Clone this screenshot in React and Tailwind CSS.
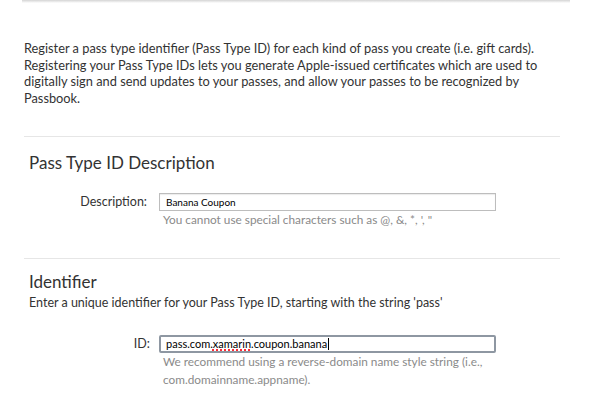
import React from 'react';

const font = { fontFamily: 'Lato, "Noto Sans", sans-serif' };

export default function App() {
  return (
    <div className="relative h-[413px] w-[600px] overflow-hidden bg-white text-[#333]" style={font}>
      {/* top edge of the panel above */}
      <div className="ml-[22px] h-[3px] w-[548px] bg-gradient-to-b from-[#d4d4d4] to-white" />

      <div className="ml-[24px] w-[536px]">
        <p className="mt-[37px] w-[545px] text-[12.8px] leading-[16.5px]">
          Register a pass type identifier (Pass Type ID) for each kind of pass you create (i.e. gift cards).
          Registering your Pass Type IDs lets you generate Apple-issued certificates which are used to
          digitally sign and send updates to your passes, and allow your passes to be recognized by
          Passbook.
        </p>

        <div className="mt-[30px] border-t border-[#e6e6e6]" />

        <h2 className="mt-[16px] pl-[5px] text-[17px] leading-[20px]">Pass Type ID Description</h2>
        <div className="mt-[20px] flex">
          <label className="w-[123px] pt-[1px] text-right text-[12.5px] leading-[16px]">Description:</label>
          <div className="ml-[12px]">
            <div className="flex h-[18px] w-[337px] items-center border border-[#bdbdbd] px-[6px] text-[10px] text-black shadow-[inset_0_1px_1px_rgba(0,0,0,0.08)]">
              Banana Coupon
            </div>
            <p className="pl-[4px] text-[11.8px] leading-[18px] text-[#8a8a8a]">
              You cannot use special characters such as @, &amp;, *, ', "
            </p>
          </div>
        </div>

        <div className="mt-[29px] border-t border-[#e6e6e6]" />

        <h2 className="mt-[13px] pl-[5px] text-[17px] leading-[20px]">Identifier</h2>
        <p className="mt-[2px] pl-[5px] text-[12.5px] leading-[17px]">
          Enter a unique identifier for your Pass Type ID, starting with the string 'pass'
        </p>
        <div className="mt-[24px] flex">
          <label className="w-[126px] pt-[1px] text-right text-[12.5px] leading-[16px]">ID:</label>
          <div className="ml-[9px]">
            <div className="flex h-[18px] w-[337px] items-center rounded-[2px] border-2 border-[#8e97a2] px-[5px] text-[11px] text-black">
              <span>pass.com.</span>
              <span className="underline decoration-red-500 decoration-dotted decoration-2 underline-offset-2">xamarin</span>
              <span>.coupon.banana</span>
              <span className="ml-[1px] h-[12px] w-px bg-black" />
            </div>
            <p className="w-[333px] pl-[4px] text-[11.8px] leading-[18px] text-[#8a8a8a]">
              We recommend using a reverse-domain name style string (i.e., com.domainname.appname).
            </p>
          </div>
        </div>
      </div>
    </div>
  );
}
